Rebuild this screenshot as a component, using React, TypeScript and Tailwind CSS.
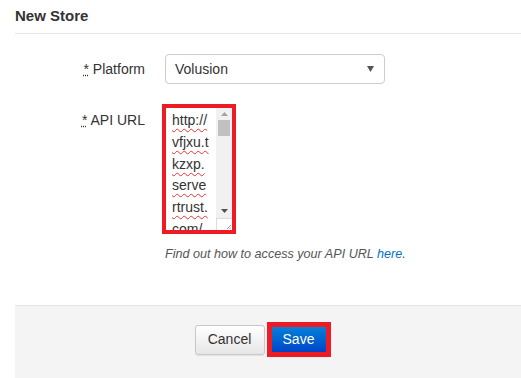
import React from "react";

const urlLines = ["http://", "vfjxu.t", "kzxp.", "serve", "rtrust.", "com/"];

const Req = () => (
  <abbr
    title="required"
    className="no-underline"
    style={{ textDecoration: "underline dotted" }}
  >
    *
  </abbr>
);

const FakeTextarea = () => (
  <div className="-ml-[3px] w-[74px] h-[130px] border-[4px] border-[#ed1c24] bg-white flex">
    {/* text */}
    <div className="flex-1 overflow-hidden pl-[6px] pt-[2px] text-[14px] leading-[21.8px] text-[#333]">
      {urlLines.map((line) => (
        <div
          key={line}
          className="underline decoration-wavy decoration-[#e33] decoration-[1px] underline-offset-[3px] whitespace-nowrap"
        >
          {line}
        </div>
      ))}
    </div>
    {/* scrollbar */}
    <div className="w-[16px] flex flex-col bg-[#f1f1f1]">
      <div className="h-[12px] flex items-center justify-center">
        <svg width="7" height="4" viewBox="0 0 7 4">
          <path d="M0 4 L3.5 0 L7 4 Z" fill="#a3a3a3" />
        </svg>
      </div>
      <div className="mx-[2px] h-[16px] bg-[#c1c1c1]" />
      <div className="flex-1" />
      <div className="h-[14px] flex items-center justify-center">
        <svg width="7" height="4" viewBox="0 0 7 4">
          <path d="M0 0 L7 0 L3.5 4 Z" fill="#505050" />
        </svg>
      </div>
      <div className="h-[12px] bg-white border-l border-t border-[#dcdcdc] relative">
        <svg
          className="absolute right-[1px] bottom-[1px]"
          width="5"
          height="5"
          viewBox="0 0 5 5"
        >
          <path d="M1 5 L5 1 M3.5 5 L5 3.5" stroke="#888" strokeWidth="0.8" />
        </svg>
      </div>
    </div>
  </div>
);

export default function App() {
  return (
    <div
      className="min-h-[378px] pl-[15px] bg-white text-[#333] flex flex-col"
      style={{ fontFamily: '"Liberation Sans", Arial, sans-serif' }}
    >
      {/* Header */}
      <div className="h-[34px] border-b border-[#e5e5e5] flex items-center">
        <h2 className="text-[15px] font-bold text-[#333]">New Store</h2>
      </div>

      {/* Body */}
      <div className="h-[271px] pt-[20px] flex flex-col text-[14px]">
        <div className="flex items-center gap-[20px]">
          <label className="w-[130px] text-right pt-[1px]">
            <Req /> Platform
          </label>
          <div className="w-[220px] h-[30px] border border-[#ccc] rounded-[4px] flex items-center justify-between pl-[9px] pr-[10px] text-[#333]">
            <span>Volusion</span>
            <svg width="7" height="6" viewBox="0 0 7 6">
              <path d="M0 0 L7 0 L3.5 6 Z" fill="#555" />
            </svg>
          </div>
        </div>

        <div className="flex items-start gap-[20px] mt-[20px]">
          <label className="w-[130px] text-right pt-[6px]">
            <Req /> API URL
          </label>
          <FakeTextarea />
        </div>

        <p className="ml-[150px] mt-[11px] text-[12.6px] italic text-[#555]">
          Find out how to access your API URL{" "}
          <a href="#" className="text-[#0070c9]">
            here
          </a>
          .
        </p>
      </div>

      {/* Footer */}
      <div className="flex-1 bg-[#f4f4f4] border-t border-[#e3e3e3] flex justify-center items-start pt-[16px] pr-[11px]">
        <div className="flex items-center gap-[2px]">
          <button
            type="button"
            className="w-[70px] h-[30px] border border-[#c8c8c8] rounded-[3px] bg-gradient-to-b from-white to-[#e6e6e6] text-[14px] text-[#333] shadow-[0_1px_1px_rgba(0,0,0,0.08)]"
          >
            Cancel
          </button>
          <div className="border-[5px] border-[#ed1c24]">
            <button
              type="button"
              className="w-[54px] h-[25px] bg-gradient-to-b from-[#0a80d8] to-[#0044c8] text-white text-[14px]"
            >
              Save
            </button>
          </div>
        </div>
      </div>
    </div>
  );
}
